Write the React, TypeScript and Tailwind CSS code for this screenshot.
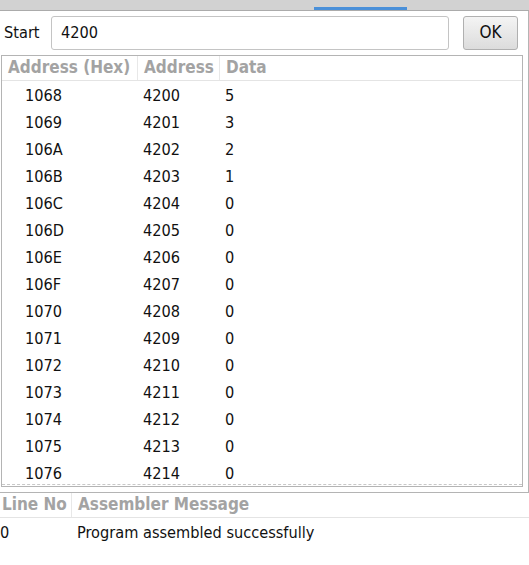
import React from "react";

const rows: [string, string, string][] = [
  ["1068", "4200", "5"],
  ["1069", "4201", "3"],
  ["106A", "4202", "2"],
  ["106B", "4203", "1"],
  ["106C", "4204", "0"],
  ["106D", "4205", "0"],
  ["106E", "4206", "0"],
  ["106F", "4207", "0"],
  ["1070", "4208", "0"],
  ["1071", "4209", "0"],
  ["1072", "4210", "0"],
  ["1073", "4211", "0"],
  ["1074", "4212", "0"],
  ["1075", "4213", "0"],
  ["1076", "4214", "0"],
];

const font = { fontFamily: '"DejaVu Sans Condensed", "DejaVu Sans", sans-serif' };

export default function App() {
  return (
    <div className="w-[529px] h-[565px] bg-white overflow-hidden text-[16.2px] text-[#111]" style={font}>
      {/* top tab strip */}
      <div className="h-[11px] bg-[#d2d2d2] border-b border-[#ababab] flex items-end">
        <div className="w-[314px]" />
        <div className="w-[93px] h-[3px] bg-[#4a90d9]" />
      </div>

      {/* outer panel */}
      <div className="w-[529px] border-r border-b border-[#b4b4b4] pb-[5px]">
        {/* start row */}
        <div className="flex items-center h-[44px] pt-[5px] pb-[5px]">
          <span className="w-[51px] pl-[4px]">Start</span>
          <div className="w-[398px] h-[34px] border border-[#c4c4c4] rounded-[3px] flex items-center pl-[9px]">
            4200
          </div>
          <div className="ml-[14px] w-[55px] h-[34px] border border-[#b0b0b0] rounded-[3px] bg-gradient-to-b from-[#f4f4f4] to-[#dcdcdc] flex items-center justify-center text-[17px]">
            OK
          </div>
        </div>

        {/* table frame */}
        <div className="ml-[1px] w-[522px] h-[432px] border border-[#b4b4b4] overflow-hidden relative">
          <div className="flex h-[25px] border-b border-[#e4e4e4] font-bold text-[#a3a3a3] text-[17px]">
            <div className="w-[136px] pl-[6px] border-r border-[#e8e8e8] flex items-center">Address (Hex)</div>
            <div className="w-[82px] pl-[6px] border-r border-[#e8e8e8] flex items-center">Address</div>
            <div className="flex-1 pl-[6px] flex items-center">Data</div>
          </div>
          {rows.map((r) => (
            <div key={r[0]} className="flex h-[27px] items-center pt-[3px]">
              <div className="w-[136px] pl-[23px]">{r[0]}</div>
              <div className="w-[82px] pl-[5px]">{r[1]}</div>
              <div className="flex-1 pl-[5px]">{r[2]}</div>
            </div>
          ))}
          <div className="absolute left-0 right-0 bottom-[1px] border-t border-dashed border-[#c8c8c8]" />
        </div>
      </div>

      {/* assembler messages */}
      <div className="flex h-[25px] border-b border-[#e4e4e4] font-bold text-[#a3a3a3] text-[17px]">
        <div className="w-[72px] pl-[2px] border-r border-[#e8e8e8] flex items-center">Line No</div>
        <div className="flex-1 pl-[6px] flex items-center">Assembler Message</div>
      </div>
      <div className="flex h-[28px] items-center pt-[2px]">
        <div className="w-[77px]">0</div>
        <div>Program assembled successfully</div>
      </div>
    </div>
  );
}
